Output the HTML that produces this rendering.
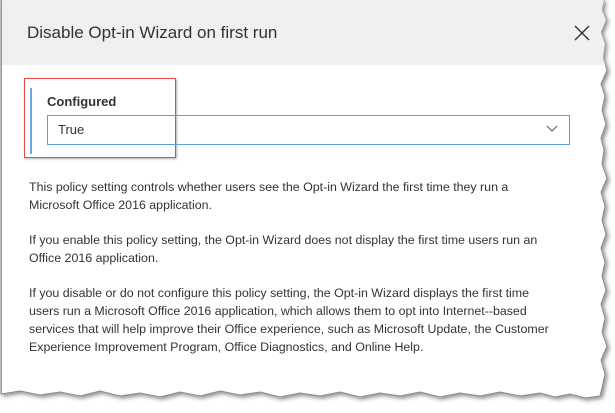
<!DOCTYPE html>
<html><head><style>
body{margin:0;width:615px;height:413px;background:#fff;position:relative;overflow:hidden;font-family:"Liberation Sans",sans-serif;color:#333}
.abs{position:absolute}
p{margin:0;position:absolute;left:29px;font-size:12.4px;line-height:18px;width:570px;color:#333}
</style></head><body>
<svg class="abs" style="left:0;top:0" width="615" height="413">
<defs><filter id="s" x="-5%" y="-5%" width="110%" height="110%"><feDropShadow dx="2" dy="2" stdDeviation="2" flood-color="#000" flood-opacity="0.45"/></filter>
<clipPath id="c"><path id="p" d="M1,0 L604,0 L602,10 L606,20 L601,32 L605,44 L603,58 L607,70 L601,84 L605,96 L602,110 L606,124 L601,138 L604,150 L602,164 L607,178 L601,192 L605,206 L602,220 L606,234 L601,248 L605,262 L602,276 L606,290 L601,304 L605,318 L602,332 L607,346 L601,360 L605,374 L602,388 L600,396 L585,398 L570,394 L555,397 L540,393 L520,396 L500,392 L480,396 L460,393 L440,397 L420,392 L400,396 L380,393 L360,397 L340,392 L320,396 L300,393 L280,397 L260,392 L240,395 L220,391 L200,396 L180,392 L160,397 L140,393 L120,396 L100,391 L80,396 L60,392 L40,395 L20,391 L1,394 Z"/></clipPath></defs>
<use href="#p" fill="#fff" stroke="#888" stroke-width="1" filter="url(#s)"/>
<g clip-path="url(#c)"><rect x="0" y="0" width="615" height="65" fill="#f0f0f0"/><line x1="1.5" y1="0" x2="1.5" y2="400" stroke="#999"/></g>
</svg>
<div class="abs" style="left:27px;top:23px;font-size:17px;color:#333">Disable Opt-in Wizard on first run</div>
<svg class="abs" style="left:574px;top:25px" width="16" height="16"><path d="M1,1L15,15M15,1L1,15" stroke="#333" stroke-width="1.4"/></svg>
<div class="abs" style="left:30px;top:88px;width:2px;height:66px;background:#6aa8e8"></div>
<div class="abs" style="left:24px;top:78px;width:150px;height:78px;border:1.5px solid #e84848;box-shadow:1px 1px 2px rgba(0,0,0,.3)"></div>
<div class="abs" style="left:47px;top:94px;font-size:13px;font-weight:bold;color:#333">Configured</div>
<div class="abs" style="left:47px;top:115px;width:521px;height:28px;border:1px solid #5aa0e0"></div>
<div class="abs" style="left:58px;top:122px;font-size:13px;color:#333">True</div>
<svg class="abs" style="left:546px;top:125px" width="12" height="8"><path d="M1,1L6,6L11,1" stroke="#555" fill="none" stroke-width="1"/></svg>
<p style="top:178px">This policy setting controls whether users see the Opt-in Wizard the first time they run a<br>Microsoft Office 2016 application.</p>
<p style="top:231px">If you enable this policy setting, the Opt-in Wizard does not display the first time users run an<br>Office 2016 application.</p>
<p style="top:284px">If you disable or do not configure this policy setting, the Opt-in Wizard displays the first time<br>users run a Microsoft Office 2016 application, which allows them to opt into Internet--based<br>services that will help improve their Office experience, such as Microsoft Update, the Customer<br>Experience Improvement Program, Office Diagnostics, and Online Help.</p>
</body></html>
